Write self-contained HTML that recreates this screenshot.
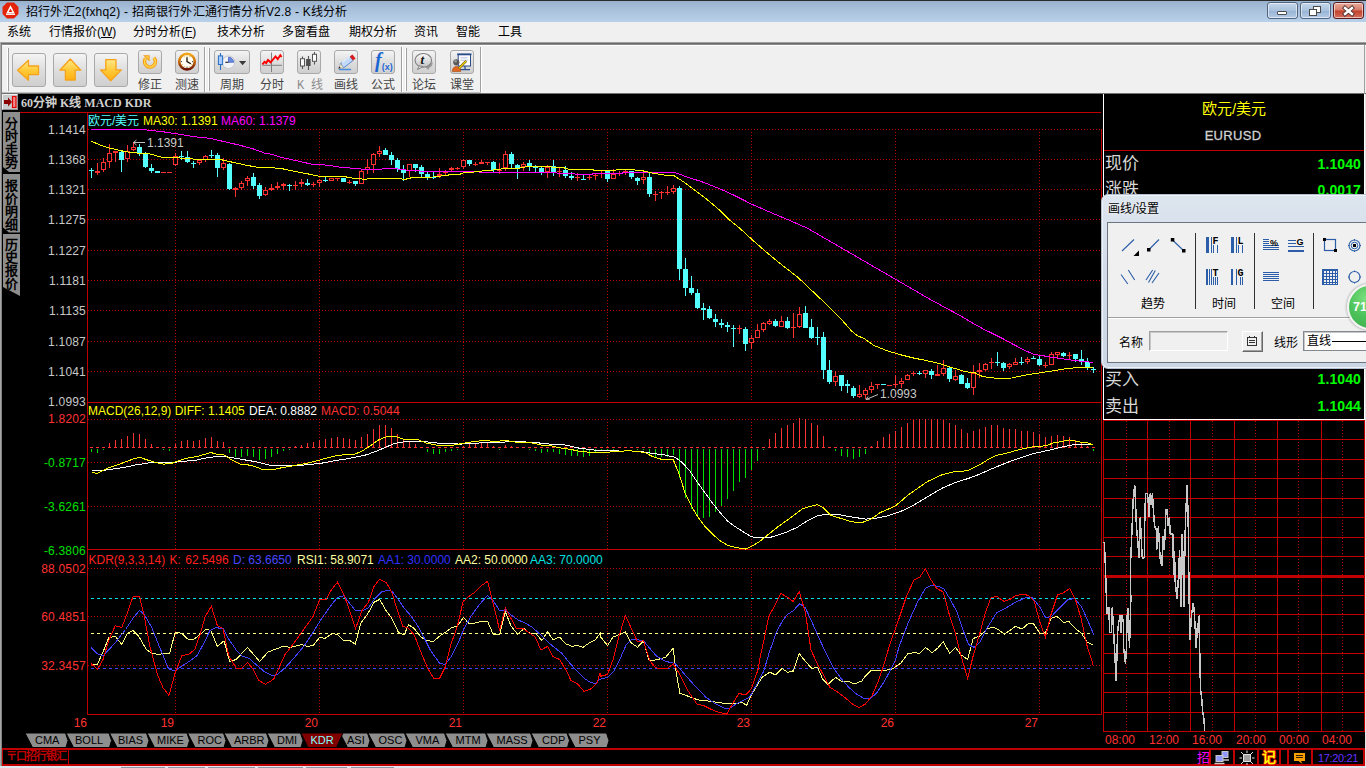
<!DOCTYPE html>
<html lang="zh-CN">
<head>
<meta charset="utf-8">
<title>招行外汇2(fxhq2) - 招商银行外汇通行情分析V2.8 - K线分析</title>
<style>
*{box-sizing:border-box;margin:0;padding:0}
html,body{width:1366px;height:768px;overflow:hidden;background:#000}
body{font-family:"Liberation Sans",sans-serif;font-size:12px;color:#000;position:relative}
.abs{position:absolute}
.t{position:absolute;white-space:nowrap;line-height:1}
#titlebar{left:0;top:0;width:1366px;height:22px;background:linear-gradient(#98b1cd 0,#a9c0db 40%,#b9d0ea 100%);border-top:1px solid #2b2b2b}
#menubar{left:0;top:22px;width:1366px;height:20px;background:#f0f0f0}
#toolbar{left:0;top:42px;width:1366px;height:52px;background:#f0f0f0;border-top:1px solid #a0a0a0}
.wb{position:absolute;top:1px;height:17px;width:31px;border:1px solid #52647e;border-radius:3px;box-shadow:inset 0 0 0 1px rgba(255,255,255,.55);background:linear-gradient(#c5d6ea,#a9c1dd 50%,#96b2d4 51%,#b4cbe6)}
.tb{position:absolute;border:1px solid #a9a9a9;border-radius:3px;background:linear-gradient(#f4f4f4,#dcdcdc 55%,#cfcfcf)}
.tl{position:absolute;top:79px;font-size:12px;color:#444;white-space:nowrap;line-height:12px}
.menu{position:absolute;top:26px;font-size:12px;line-height:13px;white-space:nowrap}
.ylab{position:absolute;left:29px;width:57px;letter-spacing:.2px;text-align:right;font-size:12px;line-height:12px;color:#c8c8c8}
.dlab{position:absolute;top:717px;width:30px;text-align:right;font-size:12px;line-height:12px;color:#ff3232}
.leg{position:absolute;font-size:12px;line-height:12px;white-space:nowrap}
.itab{position:absolute;top:733px;height:14.5px;font-size:11px;line-height:14.5px;color:#000;white-space:nowrap}
.side{position:absolute;left:3px;width:17px;background:#8e8e8e;color:#000;font-weight:bold;font-size:13px;line-height:13px;text-align:center;padding-top:5px}
.q{position:absolute;font-size:17px;line-height:17px;color:#d8d8d8;left:1105px}
.qv{position:absolute;font-size:14px;line-height:14px;color:#00ff00;right:5px;font-weight:bold;letter-spacing:.1px}
.tm{position:absolute;top:734px;font-size:12px;line-height:12px;color:#ff3232}
</style>
</head>
<body>
<!-- title bar -->
<div id="titlebar" class="abs">
 <svg class="abs" style="left:2px;top:1px" width="17" height="17" viewBox="0 0 17 17"><path d="M5 0.5h7l4.5 4.5v7l-4.5 4.5h-7l-4.5-4.5v-7z" fill="#e42408"/><path d="M8.5 3.2l4.3 8.3h-8.6zM8.5 6.4l-1.9 3.6h3.8z" fill="#fff" fill-rule="evenodd"/><path d="M4 12.3h9" stroke="#fff" stroke-width="1.2"/></svg>
 <div class="t" style="left:26px;top:4.500px;font-size:12px;letter-spacing:.2px">招行外汇2(fxhq2) - 招商银行外汇通行情分析V2.8 - K线分析</div>
 <div class="wb" style="left:1267px"><div class="abs" style="left:9px;top:8px;width:10px;height:4px;background:#fff;border:1px solid #4a4a4a;border-radius:1px"></div></div>
 <div class="wb" style="left:1300px"><div class="abs" style="left:12px;top:3px;width:8px;height:7px;border:1.5px solid #4a4a4a;background:#fff"></div><div class="abs" style="left:8px;top:6px;width:8px;height:7px;border:1.5px solid #4a4a4a;background:#fff"></div></div>
 <div class="wb" style="left:1333px;background:linear-gradient(#e8aa9c,#d77c68 48%,#c2402a 52%,#d4705e);border-color:#5a1a1a"><svg class="abs" style="left:0;top:0" width="29" height="15" viewBox="0 0 29 15"><path d="M11 5L18 11M18 5L11 11" stroke="#4a3030" stroke-width="4.200" stroke-linecap="square"/><path d="M11 5L18 11M18 5L11 11" stroke="#fff" stroke-width="2.400" stroke-linecap="square"/></svg></div>
</div>
<!-- menu -->
<div id="menubar" class="abs"></div>
<div class="menu" style="left:7px">系统</div>
<div class="menu" style="left:49px">行情报价(<u>W</u>)</div>
<div class="menu" style="left:133px">分时分析(<u>F</u>)</div>
<div class="menu" style="left:217px">技术分析</div>
<div class="menu" style="left:282px">多窗看盘</div>
<div class="menu" style="left:349px">期权分析</div>
<div class="menu" style="left:414px">资讯</div>
<div class="menu" style="left:456px">智能</div>
<div class="menu" style="left:498px">工具</div>
<!-- toolbar -->
<div id="toolbar" class="abs">
 <div class="abs" style="left:0;top:0;width:1366px;height:1px;background:#696969"></div>
 <div class="abs" style="left:0;top:1px;width:1366px;height:1px;background:#8c8c8c"></div>
 <div class="abs" style="left:2px;top:2px;width:1364px;height:1px;background:#fff"></div>
</div>
<div class="abs" style="left:0;top:42px;width:1px;height:726px;background:#a8a8a8"></div>
<div class="abs" style="left:1px;top:44px;width:1px;height:724px;background:#808080"></div>
<div class="abs" style="left:7px;top:48px;width:2px;height:43px;border-left:1px solid #fff;border-right:1px solid #a0a0a0"></div>
<div class="abs" style="left:204px;top:47px;width:2px;height:45px;border-left:1px solid #a0a0a0;border-right:1px solid #fff"></div>
<div class="abs" style="left:208px;top:48px;width:2px;height:43px;border-left:1px solid #fff;border-right:1px solid #a0a0a0"></div>
<div class="abs" style="left:401px;top:47px;width:2px;height:45px;border-left:1px solid #a0a0a0;border-right:1px solid #fff"></div>
<div class="abs" style="left:405px;top:48px;width:2px;height:43px;border-left:1px solid #fff;border-right:1px solid #a0a0a0"></div>
<div class="abs" style="left:480px;top:47px;width:2px;height:45px;border-left:1px solid #a0a0a0;border-right:1px solid #fff"></div>
<!-- big arrow buttons -->
<svg width="0" height="0" style="position:absolute"><defs><linearGradient id="ag" x1="0" y1="0" x2="0" y2="1"><stop offset="0" stop-color="#ffe88a"/><stop offset=".5" stop-color="#ffca3a"/><stop offset="1" stop-color="#ffb010"/></linearGradient></defs></svg>
<div class="tb" style="left:12px;top:53px;width:34px;height:34px"><svg width="32" height="32" viewBox="0 0 32 32"><path d="M4.600 16.200L15.500 6.200V12H25.500V20.600H15.500V26.400z" fill="url(#ag)" stroke="#f5a21a" stroke-width="1.300" stroke-linejoin="round"/></svg></div>
<div class="tb" style="left:53px;top:53px;width:34px;height:34px"><svg width="32" height="32" viewBox="0 0 32 32"><path d="M16.300 5L5.800 16.200H11.400V26H21.200V16.200H26.800z" fill="url(#ag)" stroke="#f5a21a" stroke-width="1.300" stroke-linejoin="round"/></svg></div>
<div class="tb" style="left:94px;top:53px;width:34px;height:34px"><svg width="32" height="32" viewBox="0 0 32 32"><path d="M10.800 5.700H21V15.900H26.300L15.700 26.800L5.500 15.900H10.800z" fill="url(#ag)" stroke="#f5a21a" stroke-width="1.300" stroke-linejoin="round"/></svg></div>
<!-- small icon buttons -->
<div class="tb" style="left:138px;top:50px;width:24px;height:24px"><svg width="22" height="22" viewBox="0 0 22 22"><defs><radialGradient id="rg" cx=".5" cy=".45" r=".6"><stop offset="0" stop-color="#fff0a0"/><stop offset=".55" stop-color="#ffc628"/><stop offset="1" stop-color="#ee8800"/></radialGradient><linearGradient id="ck" x1="0" y1="0" x2="0" y2="1"><stop offset="0" stop-color="#f4aa18"/><stop offset=".5" stop-color="#c86a08"/><stop offset="1" stop-color="#6a1200"/></linearGradient></defs><path d="M14.800 6.800A5.400 5.400 0 1 1 6.500 7.600" fill="none" stroke="#f39a12" stroke-width="3.600"/><path d="M4 4.200H10.600V10.400z" fill="#f39a12"/><path d="M14.800 6.800A5.400 5.400 0 1 1 6.500 7.600" fill="none" stroke="#ffd648" stroke-width="1.700"/><path d="M6 5H9.800V8.600z" fill="#ffc83a"/></svg></div>
<div class="tl" style="left:138px">修正</div>
<div class="tb" style="left:175px;top:50px;width:24px;height:24px"><svg width="22" height="22" viewBox="0 0 22 22"><circle cx="11" cy="10.600" r="7.800" fill="#fffdf4" stroke="url(#ck)" stroke-width="2.600"/><path d="M11 6.300V10.600L14.800 12.800" fill="none" stroke="#1a1208" stroke-width="1.300"/><g fill="#c89a20"><circle cx="11" cy="5" r=".6"/><circle cx="11" cy="16.200" r=".6" fill="#333"/><circle cx="5.400" cy="10.600" r=".6" fill="#333"/><circle cx="16.600" cy="10.600" r=".6" fill="#333"/><circle cx="8.200" cy="5.800" r=".5"/><circle cx="13.800" cy="5.800" r=".5"/><circle cx="6.200" cy="13.400" r=".5"/><circle cx="15.800" cy="13.400" r=".5"/><circle cx="8.200" cy="15.400" r=".5"/><circle cx="13.800" cy="15.400" r=".5"/></g></svg></div>
<div class="tl" style="left:175px">测速</div>
<div class="tb" style="left:214px;top:50px;width:36px;height:24px"><svg width="34" height="22" viewBox="0 0 34 22"><circle cx="13.500" cy="11.300" r="6.300" fill="#f2f3f6" stroke="#c4c6cc" stroke-width="1"/><path d="M13.500 11.300V6.200A5.100 5.100 0 0 1 18.600 11.300z" fill="#6a8ae0" stroke="#3a5ac0" stroke-width=".7"/><path d="M13.500 11.300H10.300" stroke="#222" stroke-width="1.100"/><path d="M5.500 2v17" stroke="#2a6fc0" stroke-width="1.100"/><rect x="3.400" y="4.900" width="4.200" height="8.600" fill="#a8ccff" stroke="#2a6fc0" stroke-width="1"/><path d="M24 10h7.200l-3.600 4.200z" fill="#3a3a3a"/></svg></div>
<div class="tl" style="left:220px">周期</div>
<div class="tb" style="left:260px;top:50px;width:24px;height:24px"><svg width="22" height="22" viewBox="0 0 22 22"><path d="M10.500 1.500V21M1.500 14.300H21" stroke="#7e7e7e" stroke-width="1"/><path d="M1.300 13.500L3.500 10.800L5.200 12.100L7 9L9.600 11.300L14.500 5.500L16.700 8.200L19.300 4.200L20.600 6" fill="none" stroke="#f00" stroke-width="1.900" stroke-linejoin="miter"/></svg></div>
<div class="tl" style="left:260px">分时</div>
<div class="tb" style="left:297px;top:50px;width:24px;height:24px"><svg width="22" height="22" viewBox="0 0 22 22"><path d="M4.500 5.500V18M10.500 5V19M16.500 1V13.500" stroke="#555" stroke-width="1.100"/><rect x="2.500" y="7.700" width="4" height="7.300" fill="#fff" stroke="#555" stroke-width="1"/><rect x="8.100" y="8" width="4.500" height="7" fill="#505050"/><rect x="14.500" y="3.300" width="4" height="7" fill="#fff" stroke="#555" stroke-width="1"/></svg></div>
<div class="tl" style="left:297px;color:#8c8c8c"><span style="font-family:'Liberation Mono',monospace;font-size:12px">K </span>线</div>
<div class="tb" style="left:334px;top:50px;width:24px;height:24px"><svg width="22" height="22" viewBox="0 0 22 22"><path d="M4.500 18.600H15.500" stroke="#2a80e0" stroke-width="1.500" stroke-linecap="round" opacity=".85"/><path d="M5.470 12.700L14.800 5.450L18 9.550L8.650 16.800z" fill="#c2daf8" stroke="#4a80d0" stroke-width=".9"/><path d="M7.100 11.500L16.400 4.300" stroke="#eaf3ff" stroke-width="1.100"/><path d="M14.800 5.450L17.400 3.450L20.600 7.550L18 9.550z" fill="#d81c1c"/><path d="M3.500 17.500L5.470 12.700L8.650 16.800z" fill="#f0e6d2" stroke="#888" stroke-width=".5"/><path d="M3.500 17.500L4.300 15.500L5.700 17.100z" fill="#1a1a1a"/></svg></div>
<div class="tl" style="left:334px">画线</div>
<div class="tb" style="left:371px;top:50px;width:24px;height:24px"><svg width="22" height="22" viewBox="0 0 22 22"><text x="3" y="15.500" font-family="Liberation Serif,serif" font-style="italic" font-weight="bold" font-size="20" fill="#1a66d0">f</text><text x="9.800" y="19" font-family="Liberation Sans,sans-serif" font-weight="bold" font-size="9" fill="#1a66d0" stroke="#fff" stroke-width=".3" paint-order="stroke">(x)</text></svg></div>
<div class="tl" style="left:371px">公式</div>
<div class="tb" style="left:412px;top:50px;width:24px;height:24px"><svg width="22" height="22" viewBox="0 0 22 22"><defs><linearGradient id="bb" x1="0" y1="0" x2="0" y2="1"><stop offset="0" stop-color="#fafafa"/><stop offset="1" stop-color="#c4c4c4"/></linearGradient></defs><path d="M14 17.500C18 17 20 14 19.500 11L12 16z" fill="#9a9a9a"/><path d="M12.500 16.200l3.500 3-0.500-3.600z" fill="#9a9a9a"/><ellipse cx="10.300" cy="9.300" rx="8.300" ry="6.800" fill="url(#bb)" stroke="#808080" stroke-width="1.100"/><path d="M6.500 14.600L4.300 18.600L10 15.800z" fill="#d8d8d8" stroke="#808080" stroke-width=".9"/><text x="7.600" y="13.300" font-family="Liberation Serif,serif" font-weight="bold" font-style="italic" font-size="13" fill="#111">t</text></svg></div>
<div class="tl" style="left:412px">论坛</div>
<div class="tb" style="left:450px;top:50px;width:24px;height:24px"><svg width="22" height="22" viewBox="0 0 22 22"><path d="M14 15v3.500M9 18.700h10" stroke="#2a4a8a" stroke-width="1.300"/><rect x="7.200" y="3.600" width="12.300" height="11.400" fill="#fdfdff" stroke="#2a4a8a" stroke-width="1"/><path d="M6.200 3.300H20.500" stroke="#2a4a8a" stroke-width="1.800"/><path d="M9.500 6.800h7M9.500 9.200h7.500" stroke="#a8b4d0" stroke-width=".8"/><circle cx="5.300" cy="11.300" r="3.100" fill="#5a5a5a"/><circle cx="4.600" cy="10.300" r="1.200" fill="#9a9a9a"/><path d="M1.300 20.500c0-3.500 2-5 4.200-5s4.300 1.500 4.300 5z" fill="#e06820" stroke="#a84a10" stroke-width=".6"/><path d="M8 17.300L15.200 10" stroke="#3a2a00" stroke-width="2.300"/><path d="M8 17.300L15.200 10" stroke="#f6d400" stroke-width="1.400"/></svg></div>
<div class="tl" style="left:450px">课堂</div>

<!-- chart header -->
<div class="abs" style="left:2px;top:92px;width:479px;height:1px;background:#c0c0c0"></div><div class="abs" style="left:2px;top:93px;width:1364px;height:1px;background:#707070"></div>
<div class="abs" style="left:2px;top:94px;width:16px;height:16px;background:#c8cccc;border-top:1px solid #f0f0f0;border-left:1px solid #f0f0f0;border-right:1px solid #909090;border-bottom:1px solid #909090">
 <svg class="abs" style="left:0;top:0" width="14" height="14" viewBox="0 0 14 14"><path d="M1 5h4V2.500L9 7 5 11.500V9h-4z" fill="#8a0000"/><rect x="9.500" y="1.500" width="3.500" height="11" fill="#e88" stroke="#e00000" stroke-width="1.200"/></svg>
</div>
<div class="t" style="left:21px;top:95.500px;font-family:'Liberation Serif',serif;font-weight:bold;font-size:12px;line-height:15px;color:#d0d0d0">60分钟 K线 MACD KDR</div>

<!-- left side tabs -->
<div class="side" style="top:112px;height:60px;clip-path:polygon(0 0,100% 0,100% 100%,6px 100%,0 calc(100% - 5px))">分时走势</div>
<div class="side" style="top:173.500px;height:59px;clip-path:polygon(0 0,100% 0,100% 100%,6px 100%,0 calc(100% - 5px))">报价明细</div>
<div class="side" style="top:234px;height:62px;padding-top:4px;clip-path:polygon(0 0,100% 0,100% 100%,0 calc(100% - 9px))">历史报价</div>

<!-- y labels -->
<div class="ylab" style="top:124px">1.1414</div>
<div class="ylab" style="top:154px">1.1368</div>
<div class="ylab" style="top:184px">1.1321</div>
<div class="ylab" style="top:214px">1.1275</div>
<div class="ylab" style="top:245px">1.1227</div>
<div class="ylab" style="top:275px">1.1181</div>
<div class="ylab" style="top:305px">1.1135</div>
<div class="ylab" style="top:336px">1.1087</div>
<div class="ylab" style="top:366px">1.1041</div>
<div class="ylab" style="top:396px">1.0993</div>
<div class="ylab" style="top:413px;color:#ff3232">1.8202</div>
<div class="ylab" style="top:457px;color:#00e000">-0.8717</div>
<div class="ylab" style="top:501px;color:#00e000">-3.6261</div>
<div class="ylab" style="top:545px;color:#00e000">-6.3806</div>
<div class="ylab" style="top:563px;color:#ff3232">88.0502</div>
<div class="ylab" style="top:611px;color:#ff3232">60.4851</div>
<div class="ylab" style="top:660px;color:#ff3232">32.3457</div>

<svg class="chart" width="1366" height="768" viewBox="0 0 1366 768"><path d="M88 129.5H1101M88 159.5H1101M88 189.5H1101M88 219.5H1101M88 250.5H1101M88 280.5H1101M88 310.5H1101M88 341.5H1101M88 371.5H1101M88 419.5H1101M88 462.5H1101M88 506.5H1101M88 568.5H1101M88 616.5H1101M88 665.5H1101M175.5 129V402M175.5 419V549M175.5 568V714M319.5 129V402M319.5 419V549M319.5 568V714M463.5 129V402M463.5 419V549M463.5 568V714M607.5 129V402M607.5 419V549M607.5 568V714M751.5 129V402M751.5 419V549M751.5 568V714M895.5 129V402M895.5 419V549M895.5 568V714M1039.5 129V402M1039.5 419V549M1039.5 568V714" stroke="#c00000" stroke-width="1" stroke-dasharray="1 2" fill="none"/><path d="M20 112.5H1101M87.5 112V715M87 402.5H1101M87 549.5H1101M87 714.5H1101M1101.5 129V715" stroke="#c00000" stroke-width="1" fill="none"/><g shape-rendering="crispEdges"><path d="M91.5 168V178M121.5 151V172M139.5 144V156M145.5 152V168M151.5 164V173M157.5 171V173M181.5 151V160M187.5 151V163M193.5 161V168M211.5 150V158M217.5 153V177M229.5 163V190M253.5 173V189M259.5 183V199M289.5 184V191M307.5 179V186M325.5 177V182M343.5 178V182M355.5 181V186M385.5 148V155M391.5 152V165M397.5 158V172M403.5 165V181M415.5 164V172M421.5 165V177M427.5 172V180M433.5 172V179M469.5 160V166M493.5 161V172M511.5 152V168M517.5 164V179M529.5 160V171M535.5 165V172M541.5 167V175M553.5 160V176M565.5 166V178M571.5 172V180M583.5 175V180M607.5 171V182M631.5 171V179M637.5 177V185M649.5 173V197M679.5 186V280M685.5 258V296M691.5 276V295M697.5 289V309M703.5 303V320M709.5 306V319M715.5 314V327M721.5 319V328M727.5 322V332M733.5 325V347M745.5 327V351M775.5 319V327M787.5 317V329M805.5 306V328M811.5 319V339M817.5 327V345M823.5 332V379M829.5 360V384M841.5 375V391M847.5 380V393M853.5 386V398M883.5 384V385M919.5 371V375M931.5 369V379M949.5 367V382M961.5 374V384M967.5 378V389M997.5 352V366M1003.5 362V371M1021.5 357V365M1033.5 356V359M1039.5 355V366M1063.5 352V357M1075.5 354V362M1081.5 350V365M1087.5 358V370M1093.5 367V373" stroke="#54ffff" stroke-width="1" fill="none"/><path d="M89.0 170h5v1h-5zM119.0 152h5v8h-5zM137.0 147h5v6h-5zM143.0 154h5v13h-5zM149.0 168h5v3h-5zM155.0 171h5v2h-5zM179.0 156h5v1h-5zM185.0 157h5v5h-5zM191.0 163h5v1h-5zM209.0 155h5v1h-5zM215.0 155h5v13h-5zM227.0 164h5v25h-5zM251.0 177h5v9h-5zM257.0 185h5v11h-5zM287.0 185h5v1h-5zM305.0 183h5v2h-5zM323.0 180h5v1h-5zM341.0 178h5v4h-5zM353.0 181h5v3h-5zM383.0 150h5v5h-5zM389.0 155h5v5h-5zM395.0 160h5v9h-5zM401.0 170h5v3h-5zM413.0 164h5v4h-5zM419.0 167h5v7h-5zM425.0 174h5v3h-5zM431.0 177h5v1h-5zM467.0 160h5v4h-5zM491.0 162h5v8h-5zM509.0 154h5v10h-5zM515.0 165h5v3h-5zM527.0 163h5v3h-5zM533.0 167h5v1h-5zM539.0 168h5v4h-5zM551.0 166h5v6h-5zM563.0 170h5v6h-5zM569.0 176h5v2h-5zM581.0 179h5v1h-5zM605.0 171h5v8h-5zM629.0 171h5v6h-5zM635.0 178h5v3h-5zM647.0 177h5v17h-5zM677.0 188h5v81h-5zM683.0 269h5v19h-5zM689.0 288h5v5h-5zM695.0 293h5v15h-5zM701.0 308h5v2h-5zM707.0 309h5v9h-5zM713.0 319h5v3h-5zM719.0 323h5v2h-5zM725.0 325h5v2h-5zM731.0 328h5v1h-5zM743.0 329h5v15h-5zM773.0 321h5v5h-5zM785.0 321h5v7h-5zM803.0 313h5v15h-5zM809.0 327h5v11h-5zM815.0 337h5v1h-5zM821.0 337h5v33h-5zM827.0 370h5v12h-5zM839.0 375h5v11h-5zM845.0 384h5v2h-5zM851.0 388h5v8h-5zM881.0 384h5v1h-5zM917.0 373h5v1h-5zM929.0 371h5v4h-5zM947.0 368h5v11h-5zM959.0 375h5v9h-5zM965.0 383h5v5h-5zM995.0 362h5v1h-5zM1001.0 363h5v5h-5zM1019.0 362h5v1h-5zM1031.0 358h5v1h-5zM1037.0 359h5v6h-5zM1061.0 353h5v3h-5zM1073.0 354h5v5h-5zM1079.0 359h5v2h-5zM1085.0 362h5v5h-5zM1091.0 369h5v1h-5z" fill="#54ffff"/><path d="M97.5 163V175M103.5 158V162M103.5 170V172M109.5 144V153M109.5 162V168M115.5 151V162M127.5 145V151M127.5 159V162M133.5 142V147M133.5 150V151M163.5 172V173M169.5 172V173M175.5 153V156M175.5 165V166M199.5 159V160M199.5 163V165M205.5 155V156M205.5 160V162M223.5 158V163M223.5 168V170M235.5 187V197M241.5 181V183M241.5 188V190M247.5 176V178M247.5 181V186M265.5 187V190M265.5 195V196M271.5 184V191M277.5 182V190M283.5 183V190M295.5 181V190M301.5 179V187M313.5 182V187M319.5 179V180M319.5 183V187M337.5 178V181M349.5 180V184M361.5 169V171M367.5 159V167M367.5 170V174M373.5 153V154M373.5 165V173M379.5 146V151M379.5 154V157M409.5 171V177M439.5 168V178M445.5 170V171M445.5 173V175M451.5 167V172M457.5 167V170M463.5 159V160M463.5 167V169M475.5 162V166M481.5 160V164M487.5 162V165M499.5 163V174M505.5 151V154M505.5 168V171M523.5 162V164M523.5 167V171M547.5 165V167M547.5 172V178M559.5 168V177M577.5 173V181M589.5 175V180M595.5 174V180M601.5 171V178M613.5 169V174M619.5 171V176M625.5 170V175M643.5 173V177M643.5 180V184M655.5 191V201M661.5 191V199M667.5 186V195M673.5 185V188M673.5 192V194M739.5 325V334M751.5 335V338M751.5 343V349M757.5 324V330M763.5 322V323M763.5 330V332M769.5 319V321M769.5 324V325M781.5 316V321M793.5 313V338M799.5 307V314M799.5 327V328M835.5 371V376M835.5 382V386M859.5 385V394M859.5 397V398M865.5 388V390M865.5 395V399M871.5 382V386M871.5 390V393M877.5 384V389M889.5 385V386M895.5 375V388M901.5 378V381M901.5 384V388M907.5 374V375M913.5 371V376M925.5 374V378M937.5 365V374M943.5 360V368M943.5 374V376M955.5 370V376M955.5 380V381M973.5 365V373M973.5 388V395M979.5 363V378M985.5 363V364M985.5 370V371M991.5 358V369M1009.5 363V364M1009.5 367V369M1015.5 358V362M1027.5 357V359M1027.5 362V364M1045.5 362V368M1051.5 352V354M1057.5 355V358M1069.5 352V359" stroke="#ff3232" stroke-width="1" fill="none"/><path d="M95.0 171h5v2h-5zM113.0 151h5v2h-5zM161.0 172h5v1h-5zM167.0 172h5v1h-5zM233.0 188h5v2h-5zM269.0 188h5v2h-5zM275.0 186h5v2h-5zM281.0 184h5v2h-5zM293.0 185h5v1h-5zM299.0 182h5v2h-5zM311.0 184h5v1h-5zM335.0 178h5v1h-5zM347.0 182h5v1h-5zM437.0 174h5v2h-5zM449.0 168h5v2h-5zM455.0 168h5v1h-5zM473.0 164h5v1h-5zM479.0 162h5v2h-5zM485.0 162h5v1h-5zM497.0 170h5v1h-5zM557.0 171h5v1h-5zM575.0 177h5v1h-5zM587.0 177h5v1h-5zM593.0 175h5v1h-5zM599.0 173h5v1h-5zM617.0 173h5v1h-5zM623.0 171h5v1h-5zM653.0 194h5v1h-5zM659.0 192h5v1h-5zM665.0 192h5v1h-5zM737.0 328h5v1h-5zM791.0 327h5v1h-5zM875.0 384h5v1h-5zM887.0 385h5v1h-5zM893.0 384h5v1h-5zM911.0 373h5v1h-5zM977.0 370h5v2h-5zM989.0 362h5v1h-5zM1043.0 365h5v1h-5zM1067.0 355h5v1h-5z" fill="#ff3232"/><path d="M101.5 162.5h4v7h-4zM107.5 153.5h4v8h-4zM125.5 151.5h4v7h-4zM131.5 147.5h4v2h-4zM173.5 156.5h4v8h-4zM197.5 160.5h4v2h-4zM203.5 156.5h4v3h-4zM221.5 163.5h4v4h-4zM239.5 183.5h4v4h-4zM245.5 178.5h4v2h-4zM263.5 190.5h4v4h-4zM317.5 180.5h4v2h-4zM329.5 178.5h4v2h-4zM359.5 171.5h4v12h-4zM365.5 167.5h4v2h-4zM371.5 154.5h4v10h-4zM377.5 151.5h4v2h-4zM407.5 164.5h4v6h-4zM443.5 171.5h4v1h-4zM461.5 160.5h4v6h-4zM503.5 154.5h4v13h-4zM521.5 164.5h4v2h-4zM545.5 167.5h4v4h-4zM611.5 174.5h4v4h-4zM641.5 177.5h4v2h-4zM671.5 188.5h4v3h-4zM749.5 338.5h4v4h-4zM755.5 330.5h4v7h-4zM761.5 323.5h4v6h-4zM767.5 321.5h4v2h-4zM779.5 321.5h4v5h-4zM797.5 314.5h4v12h-4zM833.5 376.5h4v5h-4zM857.5 394.5h4v2h-4zM863.5 390.5h4v4h-4zM869.5 386.5h4v3h-4zM899.5 381.5h4v2h-4zM905.5 375.5h4v4h-4zM923.5 370.5h4v3h-4zM935.5 374.5h4v1h-4zM941.5 368.5h4v5h-4zM953.5 376.5h4v3h-4zM971.5 373.5h4v14h-4zM983.5 364.5h4v5h-4zM1007.5 364.5h4v2h-4zM1013.5 362.5h4v2h-4zM1025.5 359.5h4v2h-4zM1049.5 354.5h4v10h-4zM1055.5 352.5h4v2h-4z" stroke="#ff3232" stroke-width="1" fill="#000"/></g><polyline shape-rendering="crispEdges" fill="none" stroke="#ff00ff" stroke-width="1"  points="90.9,129.6 142.7,129.6 161.8,131.6 178.9,134.2 193.4,136.6 209.2,138.2 226.4,142.1 239.5,145.2 252.7,148.7 264.6,153.1 268,153.3 281.2,157.3 294.4,160.3 311.5,164.1 320.7,164.5 333.9,166.1 341.8,167.6 353.7,168.2 365.5,169.5 381.3,169.5 382.6,168.2 394.5,168.2 399.8,169.5 412.9,170.5 426.1,171.5 448,171.5 478.3,171.5 479.6,172.4 556.1,172.4 557.4,173.5 574.5,173.5 575.8,174.7 591.6,174.7 592.9,173.5 621.9,173.5 623.3,172.2 628,172.2 628,172.5 674.8,172.5 687.3,177.1 701.8,181.7 720.2,189 733.4,194.9 751.5,204.1 772.9,213.4 788.8,220 808,228.5 931.2,300 939.8,304.6 950.3,310.3 959.5,315.2 972.7,323.1 988,331.6 988,331.2 1001.2,337.8 1014.4,345 1027.5,351.6 1034.1,354.5 1043.3,355.8 1053.9,357.6 1067.1,359.5 1080.2,361.1 1092.8,362.4"/><polyline shape-rendering="crispEdges" fill="none" stroke="#ffff00" stroke-width="1"  points="91.3,141.2 101.2,145.4 109.7,148.1 120.9,150.7 131.5,152.7 148.6,153.6 161.8,157.3 173.7,157.5 190.8,158.9 206.6,159.7 221.1,159.7 232.9,162.3 246.1,165.2 258,167.4 268,167.4 281.2,168.5 294.4,171.4 307.5,173.8 318.1,176.1 341.8,176.1 353.7,178.4 365.5,179.3 369.5,178.4 399.8,178.4 403.7,179.7 412.9,177.4 432.7,177 448,175.1 448,174.4 459.9,174.4 461.2,173.4 466.4,172.4 478.3,171.8 484.9,170.5 496.8,169.8 503.3,168.5 519.2,168.2 527.1,166.5 550.8,166.5 553.4,167.4 562.6,167.4 569.2,169.5 592.9,169.5 594.3,170.7 615.3,170.5 616.7,169.4 628,169.4 628,169.6 640.5,170.3 653,173.2 664.9,175.2 674.1,175.8 683.3,181.7 693.9,189.6 707.1,199.5 720.2,210.7 729.5,220 740,228.5 751.5,239.1 765,250.9 776.9,260.9 783.5,266.2 798,277.4 808,287 821.8,300 831.7,309.9 842.3,320.4 851.5,331 856.8,335.3 864.7,338.9 873.9,345.5 887.1,350.7 900.2,354.7 913.4,358 926.6,360.6 939.8,363.6 952.9,367.9 966.1,371.8 975.3,372.9 980.6,375.8 988,377.5 988,377.3 995.9,378.2 1011.7,378 1027.5,374.7 1040.7,372.7 1053.9,370.7 1067.1,368.5 1080.2,367.4 1092.8,367.2"/><g shape-rendering="crispEdges"><path d="M90.0 447.5h3M96.0 447.5h3M102.0 447.5h3M109.5 443V448M108.0 447.5h3M115.5 440V448M114.0 447.5h3M121.5 439V448M120.0 447.5h3M127.5 436V448M126.0 447.5h3M133.5 433V448M132.0 447.5h3M139.5 434V448M138.0 447.5h3M145.5 439V448M144.0 447.5h3M151.5 444V448M150.0 447.5h3M157.5 447V448M156.0 447.5h3M162.0 447.5h3M168.0 447.5h3M175.5 444V448M174.0 447.5h3M181.5 441V448M180.0 447.5h3M187.5 440V448M186.0 447.5h3M193.5 441V448M192.0 447.5h3M199.5 440V448M198.0 447.5h3M205.5 438V448M204.0 447.5h3M211.5 437V448M210.0 447.5h3M217.5 441V448M216.0 447.5h3M223.5 442V448M222.0 447.5h3M228.0 447.5h3M234.0 447.5h3M240.0 447.5h3M246.0 447.5h3M252.0 447.5h3M258.0 447.5h3M264.0 447.5h3M270.0 447.5h3M276.0 447.5h3M282.0 447.5h3M288.0 447.5h3M295.5 446V448M294.0 447.5h3M301.5 445V448M300.0 447.5h3M307.5 443V448M306.0 447.5h3M313.5 442V448M312.0 447.5h3M319.5 440V448M318.0 447.5h3M325.5 439V448M324.0 447.5h3M331.5 438V448M330.0 447.5h3M337.5 437V448M336.0 447.5h3M343.5 438V448M342.0 447.5h3M349.5 439V448M348.0 447.5h3M355.5 440V448M354.0 447.5h3M361.5 437V448M360.0 447.5h3M367.5 434V448M366.0 447.5h3M373.5 429V448M372.0 447.5h3M379.5 425V448M378.0 447.5h3M385.5 425V448M384.0 447.5h3M391.5 428V448M390.0 447.5h3M397.5 434V448M396.0 447.5h3M403.5 440V448M402.0 447.5h3M409.5 441V448M408.0 447.5h3M415.5 444V448M414.0 447.5h3M421.5 447V448M420.0 447.5h3M426.0 447.5h3M432.0 447.5h3M438.0 447.5h3M444.0 447.5h3M450.0 447.5h3M456.0 447.5h3M463.5 446V448M462.0 447.5h3M469.5 444V448M468.0 447.5h3M475.5 443V448M474.0 447.5h3M481.5 443V448M480.0 447.5h3M487.5 443V448M486.0 447.5h3M493.5 446V448M492.0 447.5h3M498.0 447.5h3M505.5 445V448M504.0 447.5h3M511.5 446V448M510.0 447.5h3M517.5 447V448M516.0 447.5h3M523.5 447V448M522.0 447.5h3M528.0 447.5h3M534.0 447.5h3M540.0 447.5h3M546.0 447.5h3M552.0 447.5h3M558.0 447.5h3M564.0 447.5h3M570.0 447.5h3M576.0 447.5h3M582.0 447.5h3M588.0 447.5h3M594.0 447.5h3M600.0 447.5h3M606.0 447.5h3M612.0 447.5h3M618.0 447.5h3M625.5 447V448M624.0 447.5h3M630.0 447.5h3M636.0 447.5h3M642.0 447.5h3M648.0 447.5h3M654.0 447.5h3M660.0 447.5h3M666.0 447.5h3M672.0 447.5h3M678.0 447.5h3M684.0 447.5h3M690.0 447.5h3M696.0 447.5h3M702.0 447.5h3M708.0 447.5h3M714.0 447.5h3M720.0 447.5h3M726.0 447.5h3M732.0 447.5h3M738.0 447.5h3M744.0 447.5h3M750.0 447.5h3M756.0 447.5h3M762.0 447.5h3M769.5 439V448M768.0 447.5h3M775.5 433V448M774.0 447.5h3M781.5 428V448M780.0 447.5h3M787.5 425V448M786.0 447.5h3M793.5 423V448M792.0 447.5h3M799.5 418V448M798.0 447.5h3M805.5 419V448M804.0 447.5h3M811.5 423V448M810.0 447.5h3M817.5 425V448M816.0 447.5h3M823.5 436V448M822.0 447.5h3M828.0 447.5h3M834.0 447.5h3M840.0 447.5h3M846.0 447.5h3M852.0 447.5h3M858.0 447.5h3M864.0 447.5h3M871.5 446V448M870.0 447.5h3M877.5 441V448M876.0 447.5h3M883.5 437V448M882.0 447.5h3M889.5 434V448M888.0 447.5h3M895.5 431V448M894.0 447.5h3M901.5 427V448M900.0 447.5h3M907.5 423V448M906.0 447.5h3M913.5 420V448M912.0 447.5h3M919.5 419V448M918.0 447.5h3M925.5 419V448M924.0 447.5h3M931.5 419V448M930.0 447.5h3M937.5 419V448M936.0 447.5h3M943.5 420V448M942.0 447.5h3M949.5 423V448M948.0 447.5h3M955.5 425V448M954.0 447.5h3M961.5 429V448M960.0 447.5h3M967.5 433V448M966.0 447.5h3M973.5 431V448M972.0 447.5h3M979.5 429V448M978.0 447.5h3M985.5 427V448M984.0 447.5h3M991.5 425V448M990.0 447.5h3M997.5 425V448M996.0 447.5h3M1003.5 428V448M1002.0 447.5h3M1009.5 429V448M1008.0 447.5h3M1015.5 429V448M1014.0 447.5h3M1021.5 431V448M1020.0 447.5h3M1027.5 431V448M1026.0 447.5h3M1033.5 432V448M1032.0 447.5h3M1039.5 434V448M1038.0 447.5h3M1045.5 437V448M1044.0 447.5h3M1051.5 436V448M1050.0 447.5h3M1057.5 435V448M1056.0 447.5h3M1063.5 436V448M1062.0 447.5h3M1069.5 437V448M1068.0 447.5h3M1075.5 440V448M1074.0 447.5h3M1081.5 443V448M1080.0 447.5h3M1087.5 446V448M1086.0 447.5h3M1092.0 447.5h3" stroke="#ff3232" stroke-width="1" fill="none"/><path d="M91.5 449V452M97.5 449V453M103.5 449V450M163.5 449V450M169.5 449V451M229.5 449V453M235.5 449V457M241.5 449V457M247.5 449V456M253.5 449V457M259.5 449V460M265.5 449V459M271.5 449V457M277.5 449V454M283.5 449V451M289.5 449V450M427.5 449V452M433.5 449V454M439.5 449V454M445.5 449V452M451.5 449V451M457.5 449V450M499.5 449V450M529.5 449V450M535.5 449V451M541.5 449V453M547.5 449V452M553.5 449V452M559.5 449V454M565.5 449V455M571.5 449V456M577.5 449V456M583.5 449V457M589.5 449V456M595.5 449V453M601.5 449V451M607.5 449V451M613.5 449V450M637.5 449V450M643.5 449V450M649.5 449V454M655.5 449V457M661.5 449V457M667.5 449V457M673.5 449V455M679.5 449V478M685.5 449V498M691.5 449V509M697.5 449V516M703.5 449V518M709.5 449V517M715.5 449V512M721.5 449V506M727.5 449V499M733.5 449V491M739.5 449V482M745.5 449V478M751.5 449V470M757.5 449V461M763.5 449V450M835.5 449V451M841.5 449V456M847.5 449V457M853.5 449V459M859.5 449V457M865.5 449V454M1093.5 449V451" stroke="#00e000" stroke-width="1" fill="none"/></g><polyline shape-rendering="crispEdges" fill="none" stroke="#ffffff" stroke-width="1"  points="91.6,470.7 101.1,470.7 110.5,469.4 125.5,467.1 136.8,464.7 149.9,462.8 170.5,462.8 181.8,461.5 196.8,460 209.9,457.2 224,456.3 234.3,458.1 245.5,460 256.8,461.9 269.9,465.3 283,466 298.1,465.6 313.1,464.1 324.3,462.8 335.6,460.4 344,459.4 355.3,457.2 366.5,454.8 377.8,450.6 385.3,447.4 392.8,444.1 400.3,442.2 411.5,441.3 422.8,441.3 434,442.8 449,443.7 460.3,444.1 475.3,443.1 494,442.6 512.8,441.6 531.5,442.2 550.3,444.1 565.3,445 580.3,448.4 591.6,449.7 600,450.6 618.8,451 637.5,451 652.5,453.4 663.8,454.8 675,457.2 682.5,462.8 690,471.3 697.5,482.5 705,492.8 712.5,503.1 720,512.5 727.5,521 735,526.6 742.5,531.3 750,536 755.7,537.8 768.8,537.8 778.2,535 787.5,531.7 796.9,527.5 806.3,521.5 817.6,515.9 825.1,514.4 838.2,514.4 847.6,516.3 856,517.6 865.4,519.1 874.8,518.5 886,516.3 899.1,512.1 912.3,506 921.6,500.3 931,494.7 942.3,488.1 955.4,482.5 968.5,478.4 979.8,474.1 994.8,467.5 1009.8,461.5 1021,457.8 1034.2,453.4 1045.4,451 1054.8,448.8 1062.3,446.9 1073.6,444.6 1092.7,444.6"/><polyline shape-rendering="crispEdges" fill="none" stroke="#ffff00" stroke-width="1"  points="91.6,472.2 97.4,473.5 106.8,468.5 116.1,465.3 125.5,461.9 133,459.1 139.6,457.2 146.1,459.6 153.6,461.9 163,464.1 170.5,463.8 178,460.9 187.4,458.1 196.8,456.6 204.3,454.4 210.8,452.5 217.4,454.4 224,454.8 230.5,459.1 239.9,464.1 251.2,465.3 262.4,469.4 273.7,469.4 283,467.5 294.3,465.6 309.3,462.8 319.6,460 329.9,457.2 337.4,455.3 344,454.9 355.3,454 362.8,450.6 370.3,445.9 377.8,440.3 385.3,437.1 390.9,436.2 397.5,437.1 404,439.4 417.1,439.4 426.5,443.1 435.9,445 447.2,445.9 456.5,444.6 465.9,442.8 475.3,441.3 486.5,440.3 494,441.8 505.3,440.3 516.5,442.2 531.5,442.8 540.9,445 550.3,445.6 559.7,447.8 569.1,449.1 578.4,451 587.8,452.1 600,452.5 618.8,451.6 628.1,450.6 645,452.5 652.5,456.6 661.9,459.4 673.1,459.4 678.8,473.1 685.3,493.8 691.9,506.9 697.5,516.3 705,526.6 712.5,534.1 720,540.7 727.5,545.3 735,547.2 745.3,549.1 751.9,546.3 759.4,541.6 768.8,534.1 778.2,526.6 787.5,520 795,514.4 802.6,508.8 810.1,506.5 817.6,504.6 823.2,507.8 830.7,515.3 840.1,518.2 849.4,521 856,522.5 861.6,522.8 871,519.1 880.4,512.5 895.4,506 908.5,494.7 927.3,481.6 942.3,474.6 955.4,471.3 967.6,470.9 979.8,464.7 987.3,460 996.7,455.3 1006,453.4 1015.4,450.6 1024.8,448.4 1034.2,446.5 1045.4,445.9 1052.9,443.1 1062.3,441.3 1069.8,439.9 1081.1,442.2 1088.6,443.1 1092.7,445"/><path d="M91 598.5H1090" stroke="#00e0e0" stroke-dasharray="3 3" fill="none"/><path d="M91 633.5H1090" stroke="#ffff80" stroke-dasharray="3 3" fill="none"/><path d="M91 668.5H1090" stroke="#4040ff" stroke-dasharray="3 3" fill="none"/><polyline shape-rendering="crispEdges" fill="none" stroke="#ffff80" stroke-width="1"  points="90.8,664.2 97.4,664.2 103,652 108.6,638 115.2,636.1 121.8,644.5 127.4,633.3 133,630.5 138.6,636.1 146.1,649.2 151.8,653.3 157.4,654.3 169.6,653.3 175.2,632.3 181.8,633.3 187.4,638.9 193,639.8 200.5,634.2 206.2,629.1 210.8,630.5 217.4,646.4 224,640.8 229.6,661.4 236.2,659.5 247.4,647.3 259.6,661.4 268,652 275.5,649.2 283,646.4 290.6,647.3 301.8,644.5 307.4,646.4 313.1,645.5 319.6,637.4 325.2,638.3 331.8,633.8 337.4,634.2 344,640.8 349.6,640.4 355.3,644.1 360.9,623 367.4,614.5 374,602.3 379.6,599.5 386.2,610.8 391.8,618.3 398.4,632.3 404,634.8 408.7,624.8 414.3,628.6 420.9,637 426.5,640.4 433.1,641.7 439.6,636.1 445.3,632.3 451.8,627.6 457.5,625.8 463.7,617.3 468.7,623.5 475.3,623 481.8,621.1 487.5,621.1 493.1,634.2 499.7,634.2 505.3,611.7 510.9,625.8 517.5,634.2 524,628.6 529.7,633.3 535.3,633.3 541.9,640.4 547.5,631.8 553.1,639.8 559.7,637 565.3,643.6 571.9,646.4 577.5,645.5 583.1,647.3 589.7,642.6 595.3,639.8 600,633.3 600,636.1 607.5,645.5 613.1,637 618.8,634.8 625.3,631.8 630.9,642.6 637.5,647.3 643.5,640.8 649.1,660.5 656.3,659.9 665.6,657.3 673.1,648.3 676,670.8 677.2,678.7 680,693.4 687.5,696 697.8,699.9 710,701.2 725,703.5 738.1,703.1 741.8,702.2 746.5,705.5 753.1,691.9 762.4,676.9 769.9,672.2 775.6,675 782.1,668.4 787.5,672.3 788.7,672.2 793.2,670.8 793.4,671.2 797.1,660 799.2,653.5 805.4,661.4 811.9,668.5 817.6,667.4 817.7,667.5 822.4,678.7 828,684.4 835.5,677.4 841.2,681 848.7,681.6 854.3,684 861.8,681 863.5,678.3 871,670.4 871.1,670.3 880.5,670.3 891.6,669.8 891.8,669.4 899.1,664.2 901.1,662.8 907.6,653.9 914.1,652.6 919.8,653.5 925.4,647.3 932,652.6 937.6,648.3 943.2,641.7 949.8,653.5 955.4,647.3 961,654.8 967.6,659.5 973.2,638.5 979.8,636.1 987.3,628.6 992.9,627.3 998.5,629.5 1004.2,634.2 1009.8,630.5 1015.4,626.3 1022,629.1 1028.5,623.3 1033.2,623.3 1039.8,633.3 1045.4,632.9 1051,618.3 1057.1,616.4 1063.2,622.4 1068.9,621.5 1075.4,628.6 1081.1,632.9 1087.6,642.6 1092.7,644.5"/><polyline shape-rendering="crispEdges" fill="none" stroke="#4040ff" stroke-width="1"  points="90.8,647.3 97.4,653.9 103,655.8 108.6,650.1 116.1,641.7 125.5,629.5 133,618.3 139.6,610.4 144.3,614.5 151.8,627.6 159.3,646.4 168.6,668.9 175.2,671.2 181.8,666.1 189.3,661.4 196.8,655.8 204.3,642.6 209.9,630.5 215.5,627.6 223,628.6 228.7,638.9 236.2,650.1 241.8,655.8 249.3,658.6 256.8,665.2 264.3,671.7 272.7,675.8 277.4,674.5 284.9,668 294.3,657.6 303.7,646.4 313.1,632.3 320.6,620.1 329.9,607 337.4,597.3 344,595.8 349.6,603.3 355.3,610.4 362.8,610.4 368.4,607.9 374.9,598.6 381.5,592 386.2,590.5 391.8,591.1 398.4,599.5 404,607.9 410.6,615.5 417.1,624.8 423.7,637 430.3,650.1 439.6,663.3 445.3,664.6 451.8,655.8 458.4,642.6 464,628.6 471.5,615.5 479,605.1 487.5,595.4 493.1,600.4 499.7,610.8 505.3,609.8 512.8,616.4 518.4,620.1 525,623 531.5,626.7 539,633.3 546.6,640.8 554.1,647.3 561.6,653 569.1,662.3 576.6,670.8 584.1,678.3 589.7,682 595.3,683.5 600,679.2 607.5,677.3 614.1,670.8 620.6,657.6 626.3,644.5 631.9,639.3 637.5,639.8 643.5,640.8 649.7,648.3 656.3,655.8 663.8,660.5 669.4,662.3 675,663.3 681.9,671.2 689.4,679.7 696.9,688.1 706.2,697.5 715.6,704 725,708.4 728.7,708.7 736.2,704 743.7,700.3 749.3,697.5 756.8,684.4 762.4,673.1 763.2,672.7 767.1,660 768.8,653.9 776.3,632.3 782.9,620.1 787.5,614.5 793.2,610.8 799.7,603.6 805.4,607.9 811.9,622 818.5,637 825.1,651.1 832.6,666.1 834.6,669.4 841.2,678.7 848.7,687.2 856.1,693.7 863.6,698.4 870.2,698.8 876.8,692.8 884.3,681.6 890.8,669.4 895.5,660 899.1,646.4 908.5,622 917.9,601.4 925.4,588.3 931,585.4 938.5,586.4 944.1,589.2 949.8,598.6 957.3,612.6 962.9,629.5 968.5,644.5 974.2,647.3 979.8,642.6 987.3,627.6 996.7,612.6 1006,607.9 1015.4,602.3 1024.8,598 1032.3,597.6 1039.8,607 1045.4,617.3 1051,616.8 1058.6,608.9 1067.9,599.5 1074.5,598.6 1081.1,606.1 1087.6,620.1 1093.8,634.8"/><polyline shape-rendering="crispEdges" fill="none" stroke="#ff0000" stroke-width="1"  points="90.8,663.3 97.4,669.3 103,659.5 108.6,640.8 115.2,625.8 121.8,627.6 127.4,612.6 133,596.7 139.6,596.7 144.3,616.4 149.9,646.4 157.4,674.5 163,687.7 169,695.5 175.2,672.7 181.8,655.8 189.3,653.9 194.9,649.2 200.5,633.3 205.2,616.4 211.4,606.4 217.4,625.8 223,628.6 228.7,655.8 236.2,668.3 241.8,668.3 247.4,662.3 253,668.9 258.7,680.2 265.2,684.3 273.7,679.2 279.3,667 284.9,654.8 294.3,642.6 303.7,629.5 313.1,616.4 319.6,599.5 326.2,599.1 331.8,589.2 337.4,582.3 344,594.8 349.6,610.8 355.6,628.6 361.8,610.8 368.4,602.3 374,586.4 379.6,579.3 386.2,582.6 391.8,592 397.5,610.8 403.1,626.7 407.8,627.6 414.3,635.1 420.9,652 427.5,668 434,678.7 439.6,678.3 445.3,667 450.9,644.5 457.5,625.8 463.1,601.4 469.7,595.8 475.3,592 481.8,585.4 487.5,581.3 493.1,603.3 499.7,630.5 505.3,607.9 510.9,618.3 516.5,628.6 523.1,628.6 529.7,633.3 535.3,637 540.9,650.1 547.5,646.4 553.1,656.7 559.7,659.5 565.3,668.9 570.9,680.2 577.5,683.9 584.1,691.4 591.6,688.6 597.2,683 600,672.7 600,676.4 607.5,674.5 613.1,659.5 618.8,637 625.3,615.5 631.9,629.5 637.5,641.7 643.5,640.8 649.7,660.5 655.6,667.9 666.9,669 673.4,663.7 680,675 687.5,690 696.9,704 704.3,705.9 711.8,709.7 719.3,712.5 726.8,713.8 732.5,704 739,693.4 745.6,695 751.2,689 756.8,673.1 758.5,668 759.6,660 765,635.1 768.8,616.4 774.4,606.1 781,593.5 787.5,597.3 793.2,601.4 799.2,591.6 805.4,612.6 811,650.1 817.6,664.2 822.4,673.1 829.9,687.2 837.4,691.9 844.9,697.5 852.4,704 859,707.4 865.5,704 872.1,695.6 877.7,682.5 882.4,669.4 885.2,660 889.8,644.5 899.1,618.3 906.6,595.8 914.1,579.8 919.8,577 925.4,568.6 931,579.8 936.6,588.3 943.2,592 949.8,616.4 955.4,633.3 961,655.8 967.6,678.3 973.2,655.8 979.8,633.3 985.4,612.6 991,597.6 996.7,596.3 1004.2,601.4 1009.8,599.5 1015.4,595.8 1022.9,594.3 1028.5,595.4 1034.2,601.4 1039.8,622 1045.4,637 1051,614.5 1057.6,594.8 1063.2,592.9 1069.8,588.6 1075.4,599.5 1081.1,618.3 1086.7,644.5 1093.2,665.2"/><path d="M133.5 142.5H145M133.5 142.5l3-2.5M133.5 142.5l3 2.5" stroke="#c0c0c0" fill="none"/><path d="M866 399.5L878 394.5M866 399.5l4-0.5M866 399.5l2-3" stroke="#c0c0c0" fill="none"/></svg>

<!-- legends -->
<div class="leg" style="left:88px;top:115px;color:#54ffff">欧元/美元</div>
<div class="leg" style="left:143px;top:115px;color:#ffff00">MA30: 1.1391</div>
<div class="leg" style="left:221px;top:115px;color:#ff00ff">MA60: 1.1379</div>
<div class="leg" style="left:88px;top:405px;color:#ffff00">MACD(26,12,9) DIFF: 1.1405</div>
<div class="leg" style="left:249px;top:405px;color:#fff">DEA: 0.8882</div>
<div class="leg" style="left:321px;top:405px;color:#ff3232">MACD: 0.5044</div>
<div class="leg" style="left:88.500px;top:554px;color:#ff2020;word-spacing:1px">KDR(9,3,3,14) K: 62.5496</div>
<div class="leg" style="left:233px;top:554px;color:#4848ff">D: 63.6650</div>
<div class="leg" style="left:297px;top:554px;color:#ffffa0">RSI1: 58.9071</div>
<div class="leg" style="left:378px;top:554px;color:#3030ff">AA1: 30.0000</div>
<div class="leg" style="left:455px;top:554px;color:#ffffa0">AA2: 50.0000</div>
<div class="leg" style="left:530px;top:554px;color:#00e0e0">AA3: 70.0000</div>
<div class="leg" style="left:147px;top:137px;color:#c8c8c8">1.1391</div>
<div class="leg" style="left:880px;top:388px;color:#c8c8c8">1.0993</div>

<!-- date labels -->
<div class="dlab" style="left:57px">16</div>
<div class="dlab" style="left:144px">19</div>
<div class="dlab" style="left:288px">20</div>
<div class="dlab" style="left:432px">21</div>
<div class="dlab" style="left:576px">22</div>
<div class="dlab" style="left:720px">23</div>
<div class="dlab" style="left:864px">26</div>
<div class="dlab" style="left:1008px">27</div>

<!-- indicator tabs -->
<svg class="abs" style="left:0;top:0" width="1366" height="768" viewBox="0 0 1366 768"><path d="M25 733H65.5L68 740.5L66 747.500H32.5z" fill="#8e8e8e" stroke="#000" stroke-width="1"/><path d="M66 733H109.0L111.5 740.5L109.5 747.500H73.5z" fill="#8e8e8e" stroke="#000" stroke-width="1"/><path d="M109.5 733H146.5L149 740.5L147 747.500H117.0z" fill="#8e8e8e" stroke="#000" stroke-width="1"/><path d="M147 733H187.0L189.5 740.5L187.5 747.500H154.5z" fill="#8e8e8e" stroke="#000" stroke-width="1"/><path d="M187.5 733H223.5L226 740.5L224 747.500H195.0z" fill="#8e8e8e" stroke="#000" stroke-width="1"/><path d="M224 733H266.5L269 740.5L267 747.500H231.5z" fill="#8e8e8e" stroke="#000" stroke-width="1"/><path d="M267 733H300.5L303 740.5L301 747.500H274.5z" fill="#8e8e8e" stroke="#000" stroke-width="1"/><path d="M340 733H367.5L370 740.5L368 747.500H347.5z" fill="#8e8e8e" stroke="#000" stroke-width="1"/><path d="M368 733H404.5L407 740.5L405 747.500H375.5z" fill="#8e8e8e" stroke="#000" stroke-width="1"/><path d="M405 733H444.5L447 740.5L445 747.500H412.5z" fill="#8e8e8e" stroke="#000" stroke-width="1"/><path d="M445 733H485.5L488 740.5L486 747.500H452.5z" fill="#8e8e8e" stroke="#000" stroke-width="1"/><path d="M486 733H530.5L533 740.5L531 747.500H493.5z" fill="#8e8e8e" stroke="#000" stroke-width="1"/><path d="M531 733H567.0L569.5 740.5L567.5 747.500H538.5z" fill="#8e8e8e" stroke="#000" stroke-width="1"/><path d="M567.5 733H606.5L609 740.5L607 747.500H575.0z" fill="#8e8e8e" stroke="#000" stroke-width="1"/><path d="M301 733H343L336.500 747.500H308z" fill="#800000" stroke="#000" stroke-width="1"/></svg>
<div class="itab" style="left:35px">CMA</div>
<div class="itab" style="left:75px">BOLL</div>
<div class="itab" style="left:118px">BIAS</div>
<div class="itab" style="left:157px">MIKE</div>
<div class="itab" style="left:197.5px">ROC</div>
<div class="itab" style="left:234px">ARBR</div>
<div class="itab" style="left:277px">DMI</div>
<div class="itab" style="left:310.5px;color:#80ffff">KDR</div>
<div class="itab" style="left:347px">ASI</div>
<div class="itab" style="left:378.5px">OSC</div>
<div class="itab" style="left:415.5px">VMA</div>
<div class="itab" style="left:455.5px">MTM</div>
<div class="itab" style="left:496.5px">MASS</div>
<div class="itab" style="left:542px">CDP</div>
<div class="itab" style="left:578.5px">PSY</div>

<!-- status bar -->
<div class="abs" style="left:2px;top:748px;width:1364px;height:2px;background:#c00000"></div>
<div class="abs" style="left:2px;top:750px;width:67px;height:15px;border:1px solid #c00000;border-top:none;color:#c00000;font-size:11px;line-height:12px;font-weight:bold;overflow:hidden;padding-left:3px;letter-spacing:-1px">〒口招行银汇</div>
<div class="abs" style="left:2px;top:764px;width:1364px;height:2px;background:#c00000"></div>
<div class="abs" style="left:0;top:766px;width:1366px;height:2px;background:#dfe7f1"></div>
<div class="abs" style="left:121px;top:766.500px;width:44px;height:2px;background:#fbfcfe;border:1px solid #8a96a8;border-bottom:none"></div><div class="abs" style="left:168px;top:766.500px;width:37px;height:2px;background:#fbfcfe;border:1px solid #8a96a8;border-bottom:none"></div><div class="abs" style="left:208px;top:766.500px;width:47px;height:2px;background:#fbfcfe;border:1px solid #8a96a8;border-bottom:none"></div><div class="abs" style="left:258px;top:766.500px;width:45px;height:2px;background:#fbfcfe;border:1px solid #8a96a8;border-bottom:none"></div><div class="abs" style="left:306px;top:766.500px;width:41px;height:2px;background:#fbfcfe;border:1px solid #8a96a8;border-bottom:none"></div><div class="abs" style="left:351px;top:766.500px;width:43px;height:2px;background:#fbfcfe;border:1px solid #8a96a8;border-bottom:none"></div>

<!-- right panel -->
<div class="abs" style="left:1364px;top:45px;width:1px;height:49px;background:#a0a0a0"></div>
<div class="abs" style="left:1365px;top:94px;width:1px;height:672px;background:#e4e4e4"></div>
<div class="abs" style="left:1103px;top:94px;width:262px;height:326px;border:1px solid #fff;border-top:none;background:#000"></div>
<div class="abs" style="left:1103px;top:420px;width:1px;height:312px;background:#c00000"></div>
<div class="abs" style="left:1104px;top:150px;width:260px;height:1px;background:#c00000"></div>
<div class="t" style="left:1104px;top:101px;width:260px;text-align:center;font-size:15px;color:#ffff00">欧元/美元</div>
<div class="t" style="left:1104px;top:129px;width:258px;text-align:center;font-size:13px;color:#d0d0d0;letter-spacing:.3px;-webkit-text-stroke:.3px #d0d0d0">EURUSD</div>
<div class="q" style="top:155px">现价</div><div class="qv" style="top:157px">1.1040</div>
<div class="q" style="top:181px">涨跌</div><div class="qv" style="top:183px">0.0017</div>
<div class="q" style="top:371px">买入</div><div class="qv" style="top:372px">1.1040</div>
<div class="q" style="top:398px">卖出</div><div class="qv" style="top:399px">1.1044</div>
<svg class="abs" style="left:0;top:0" width="1366" height="768" viewBox="0 0 1366 768"><path d="M1104 420.5H1365M1104 439.5H1365M1104 459.5H1365M1104 478.5H1365M1104 498.5H1365M1104 517.5H1365M1104 537.5H1365M1104 556.5H1365M1104 576.5H1365M1104 595.5H1365M1104 614.5H1365M1104 634.5H1365M1104 653.5H1365M1104 673.5H1365M1104 692.5H1365M1104 712.5H1365M1104 731.5H1365M1147.5 420V731M1190.5 420V731M1234.5 420V731M1277.5 420V731M1321.5 420V731M1364.5 420V732" stroke="#c00000" stroke-width="1" fill="none" shape-rendering="crispEdges"/><path d="M1126.5 421V731M1169.5 421V731M1212.5 421V731M1255.5 421V731M1298.5 421V731M1342.5 421V731" stroke="#c00000" stroke-width="1" stroke-dasharray="1 2" fill="none"/><path d="M1104 576.5H1364" stroke="#c00000" stroke-width="3" fill="none"/><polyline shape-rendering="crispEdges" fill="none" stroke="#c8c8c8" stroke-width="1.5" stroke-linejoin="bevel" points="1104.2,541.8 1105.1,557.9 1105.9,581.6 1107.0,614.1 1108.8,607.0 1109.7,632.5 1111.4,632.5 1112.3,607.0 1113.7,632.5 1114.9,656.2 1116.2,680.8 1117.6,632.5 1118.5,623.7 1120.2,614.9 1121.1,632.5 1122.0,614.9 1123.7,624.6 1123.7,648.3 1125.5,664.1 1126.4,648.3 1127.2,615.8 1128.1,607.9 1129.5,648.3 1130.2,622.8 1130.8,600.0 1130.5,564.6 1132.2,525.7 1133.0,502.0 1134.7,485.1 1135.5,502.0 1136.4,525.7 1138.1,545.2 1138.9,557.9 1140.3,517.2 1141.5,544.3 1142.3,557.9 1144.3,557.9 1144.9,510.5 1145.7,493.5 1147.4,493.5 1148.2,502.0 1149.1,517.2 1150.3,493.5 1151.1,505.4 1152.5,493.5 1153.3,508.8 1154.5,525.7 1156.7,530.8 1156.7,550.2 1158.4,526.5 1160.1,557.9 1161.8,566.3 1163.0,535.9 1164.3,550.2 1165.2,530.8 1166.0,509.6 1167.4,509.6 1168.0,525.7 1169.4,517.2 1170.2,534.2 1172.8,534.2 1173.6,574.8 1174.5,551.1 1175.3,583.2 1177.0,598.5 1178.2,581.6 1179.6,550.2 1180.9,606.9 1182.1,534.2 1182.9,554.5 1183.8,606.9 1185.5,517.2 1187.2,485.1 1188.0,513.9 1188.4,534.2 1188.9,586.6 1190.0,640.4 1191.4,615.8 1193.1,603.5 1194.0,607.9 1194.9,622.8 1196.3,648.3 1197.5,622.8 1198.4,632.5 1199.3,614.9 1199.8,656.2 1200.5,689.6 1201.6,696.7 1202.8,712.5 1204.0,719.5 1204.6,730.9"/></svg>
<div class="tm" style="left:1105px">08:00</div>
<div class="tm" style="left:1149px">12:00</div>
<div class="tm" style="left:1192px">16:00</div>
<div class="tm" style="left:1236px">20:00</div>
<div class="tm" style="left:1279px">00:00</div>
<div class="tm" style="left:1322px">04:00</div>

<!-- dialog -->
<div class="abs" id="dlg" style="left:1101px;top:194px;width:280px;height:175px;border-radius:7px;background:linear-gradient(#dde5ef,#d3dce8 40%,#ccd7e5);border:1px solid #b4c0d0;box-shadow:inset 0 0 0 1px #eef3fa">
 <div class="t" style="left:6px;top:7.500px;font-size:12px;color:#000;text-shadow:0 0 4px #fff">画线/设置</div>
 <div class="abs" style="left:5px;top:27px;width:280px;height:141px;background:#f0f0f0;border:1px solid #6c7480"></div>
</div>
<svg class="abs" style="left:0;top:0" width="1366" height="768" viewBox="0 0 1366 768">
<g stroke="#2c5da8" stroke-width="1.1" fill="none">
<path d="M1122 251L1134 239.500M1149 249.500L1159 239.500M1172.500 240L1183.500 250.500"/>
<path d="M1121 274.500L1127.800 284M1128.300 270L1134.700 280M1146 280L1152.700 270M1148.500 282.500L1155.300 270.500M1152 283L1159 273"/>
</g>
<path d="M1139 250.500V256H1133.500z" fill="#000"/>
<rect x="1147" y="248" width="3.500" height="3.500" fill="#000"/>
<rect x="1170.800" y="238" width="3.500" height="3.500" fill="#000"/>
<rect x="1182" y="249" width="3.500" height="3.500" fill="#000"/>
<g shape-rendering="crispEdges" fill="#2c5da8">
<path d="M1195 233h1v76h-1zM1254 233h1v76h-1zM1313 233h1v76h-1z" fill="#303030"/>
<!-- F -->
<rect x="1206" y="237" width="3" height="16"/><rect x="1211" y="237" width="1" height="16"/><rect x="1213" y="245" width="1" height="8"/><rect x="1217" y="245" width="1" height="8"/>
<!-- L -->
<rect x="1231" y="237" width="3" height="16"/><rect x="1236" y="237" width="1" height="16"/><rect x="1238" y="245" width="1" height="8"/><rect x="1242" y="245" width="1" height="8"/>
<!-- T -->
<rect x="1206" y="269" width="2" height="16"/><rect x="1209" y="269" width="1" height="16"/><rect x="1211" y="269" width="1" height="16"/><rect x="1213" y="277" width="1" height="8"/><rect x="1215" y="277" width="1" height="8"/><rect x="1217" y="277" width="1" height="8"/>
<!-- G -->
<rect x="1231" y="269" width="2" height="16"/><rect x="1236" y="269" width="1" height="16"/><rect x="1240" y="277" width="1" height="8"/><rect x="1242" y="277" width="1" height="8"/>
<!-- space % -->
<rect x="1263" y="239" width="6" height="1"/><rect x="1263" y="241" width="6" height="1"/><rect x="1263" y="243" width="6" height="1"/><rect x="1263" y="245" width="16" height="1"/><rect x="1263" y="247" width="16" height="1"/><rect x="1263" y="249" width="16" height="1"/>
<!-- space G -->
<rect x="1288" y="240" width="8" height="1"/><rect x="1288" y="243" width="8" height="1"/><rect x="1288" y="246" width="16" height="1"/><rect x="1288" y="250" width="16" height="2"/>
<!-- lines -->
<rect x="1263" y="272" width="16" height="1"/><rect x="1263" y="274" width="16" height="1"/><rect x="1263" y="276" width="16" height="1"/><rect x="1263" y="278" width="16" height="1"/><rect x="1263" y="280" width="16" height="1"/>
<!-- grid -->
<path d="M1322 269h16v16h-16z"/>
<path d="M1323.500 270.500h2v2h-2zm3 0h2v2h-2zm3 0h2v2h-2zm3 0h2v2h-2zm3 0h1.500v2h-1.500zM1323.500 273.500h2v2h-2zm3 0h2v2h-2zm3 0h2v2h-2zm3 0h2v2h-2zm3 0h1.500v2h-1.500zM1323.500 276.500h2v2h-2zm3 0h2v2h-2zm3 0h2v2h-2zm3 0h2v2h-2zm3 0h1.500v2h-1.500zM1323.500 279.500h2v2h-2zm3 0h2v2h-2zm3 0h2v2h-2zm3 0h2v2h-2zm3 0h1.500v2h-1.500zM1323.500 282.500h2v1.500h-2zm3 0h2v1.500h-2zm3 0h2v1.500h-2zm3 0h2v1.500h-2zm3 0h1.500v1.500h-1.500z" fill="#f0f0f0"/>
</g>
<rect x="1324.500" y="239.500" width="11" height="11" fill="none" stroke="#2c5da8" stroke-width="1.200"/>
<rect x="1323" y="238" width="3" height="3" fill="#000"/><rect x="1334" y="249" width="3" height="3" fill="#000"/>
<circle cx="1354.500" cy="245.500" r="5.500" fill="none" stroke="#2c5da8" stroke-width="1.100"/><circle cx="1354.500" cy="245.500" r="3.300" fill="none" stroke="#2c5da8" stroke-width="1"/><rect x="1353" y="244" width="3" height="3" fill="#000"/>
<path d="M1354.500 239v1.500M1354.500 250.500v1.500M1348 245.500h1.500M1359.500 245.500h1.500" stroke="#2c5da8"/>
<circle cx="1354.500" cy="277" r="5.500" fill="none" stroke="#2c5da8" stroke-width="1.200"/>
<path d="M1354.500 270.500v1.500M1354.500 282v1.500M1348 277h1.500M1359.500 277h1.500" stroke="#2c5da8"/>
<g font-family="Liberation Mono,monospace" font-weight="bold" font-size="10" fill="#000">
<text x="1212.500" y="243.500">F</text><text x="1237.500" y="243.500">L</text><text x="1212.500" y="275.500">T</text><text x="1237.500" y="275.500">G</text>
</g>
<g font-family="Liberation Sans,sans-serif" font-size="10" fill="#000"><text x="1270" y="245.800" font-size="9" font-weight="bold">%</text><text x="1296.500" y="244.800" font-size="9" font-weight="bold">G</text></g>
</svg>
<div class="t" style="left:1141px;top:298px;font-size:12px;line-height:12px">趋势</div>
<div class="t" style="left:1212px;top:298px;font-size:12px;line-height:12px">时间</div>
<div class="t" style="left:1271px;top:298px;font-size:12px;line-height:12px">空间</div>
<div class="abs" style="left:1108px;top:317px;width:258px;height:2px;border-top:1px solid #a0a0a0;border-bottom:1px solid #fff"></div>
<div class="t" style="left:1119px;top:336.500px;font-size:12px;line-height:12px">名称</div>
<div class="abs" style="left:1149px;top:331px;width:79px;height:20px;background:#f0f0f0;border:1px solid #a0a0a0;border-right-color:#fff;border-bottom-color:#fff;box-shadow:inset 1px 1px 0 #c8c8c8"></div>
<div class="abs" style="left:1242px;top:331px;width:21px;height:21px;background:#f0f0f0;border:1px solid #fff;border-right-color:#696969;border-bottom-color:#696969;box-shadow:inset -1px -1px 0 #a0a0a0">
 <svg width="19" height="19" viewBox="0 0 19 19"><rect x="4.500" y="5.500" width="9" height="8" fill="none" stroke="#333"/><path d="M6 8.500h6M6 10.500h6M6.500 4v2M11.500 4v2" stroke="#333"/></svg>
</div>
<div class="t" style="left:1274px;top:336.500px;font-size:12px;line-height:12px">线形</div>
<div class="abs" style="left:1303px;top:331px;width:70px;height:20px;background:#fff;border:1px solid #828790;box-shadow:inset 1px 1px 0 #c8c8c8"><div class="t" style="left:3px;top:3px;font-size:12px;line-height:12px">直线</div><div class="abs" style="left:28px;top:9px;width:40px;height:1px;background:#000"></div></div>
<!-- green ball -->
<div class="abs" style="left:1347px;top:283.500px;width:46px;height:46px;border-radius:50%;background:radial-gradient(circle at 40% 30%,#7be07f 0,#4cc25a 45%,#3aa848 100%);border:2px solid #f4f4f4;box-shadow:0 0 3px rgba(0,0,0,.45)"><div class="t" style="left:4px;top:15px;font-size:12.5px;font-weight:bold;color:#fff">71</div></div>
<!-- status icons -->
<svg class="abs" style="left:0;top:0" width="1366" height="768" viewBox="0 0 1366 768">
<g fill="#c00000" shape-rendering="crispEdges"><rect x="1209" y="750" width="2" height="14"/><rect x="1233" y="750" width="2" height="14"/><rect x="1257" y="750" width="2" height="14"/><rect x="1279" y="750" width="2" height="14"/><rect x="1287" y="750" width="2" height="14"/><rect x="1311" y="750" width="2" height="14"/><rect x="1363" y="750" width="2" height="14"/></g>
<!-- network -->
<rect x="1222" y="751.500" width="6" height="6" fill="#9098ff" stroke="#c8c8c8" stroke-width="1"/><path d="M1221 760h8" stroke="#c8c8c8" stroke-width="1.500"/>
<rect x="1216" y="755.500" width="7" height="6" fill="#9098ff" stroke="#c8c8c8" stroke-width="1"/><path d="M1214.500 763.500h10" stroke="#c8c8c8" stroke-width="1.500"/>
<!-- sun -->
<rect x="1243.500" y="754.500" width="7" height="7" fill="#a0a0a0" stroke="#e0e0e0"/><path d="M1241 752l2 2M1253 752l-2 2M1241 764l2-2M1253 764l-2-2M1247 750.500v2.500M1247 763v2M1239.500 758h2.500M1252 758h2.500" stroke="#e0e0e0"/>
<!-- chat -->
<path d="M1294 753h11v8h-4l1.500 3-4-3H1294z" fill="#f5a000"/><path d="M1296 755.500h7M1296 757.500h7" stroke="#000" stroke-width=".8"/>
</svg>
<div class="t" style="left:1197px;top:751px;font-size:13px;line-height:13px;color:#ff00ff">招</div>
<div class="t" style="left:1262px;top:750px;font-size:14px;line-height:14px;color:#ffff00;font-weight:bold;text-shadow:1px 0 #e00000,-1px 0 #e00000,0 1px #e00000,0 -1px #e00000">记</div>
<div class="t" style="left:1318px;top:752px;font-size:11px;line-height:12px;color:#6a30ff;letter-spacing:-.35px">17:20:21</div>

</body>
</html>
